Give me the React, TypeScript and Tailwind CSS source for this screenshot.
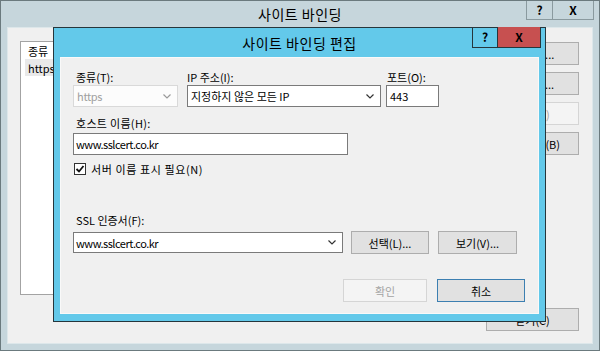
import React from "react";

function Chevron({ color = "#333" }: { color?: string }) {
  return (
    <svg width="8" height="5" viewBox="0 0 8 5" className="shrink-0">
      <path d="M0.5 0.5 L4 4 L7.5 0.5" fill="none" stroke={color} strokeWidth="1.2" />
    </svg>
  );
}

function Combo({ value, width, disabled }: { value: string; width: string; disabled?: boolean }) {
  return (
    <div
      className={`flex h-[22px] items-center justify-between pl-[3px] pr-[6px] ${width} ${
        disabled ? "border border-[#d9d9d9] bg-[#fcfcfc] text-[#a0a0a0]" : "border border-[#7a7a7a] bg-white text-black"
      }`}
    >
      <span className={disabled ? "tracking-[-0.3px]" : ""}>{value}</span>
      <Chevron color={disabled ? "#9a9a9a" : "#333"} />
    </div>
  );
}

function Btn({ label, width, variant = "normal" }: { label: string; width: string; variant?: "normal" | "default" | "disabled" }) {
  const look =
    variant === "disabled"
      ? "border-[#d5d5d5] bg-[#f4f4f4] text-[#a3a3a3]"
      : variant === "default"
        ? "border-[#3c7fb1] bg-[#e1e1e1] text-black"
        : "border-[#adadad] bg-[#e1e1e1] text-black";
  return <div className={`flex h-[23px] items-center justify-center border ${look} ${width}`}>{label}</div>;
}

export default function App() {
  return (
    <div className="relative h-[351px] w-[600px] overflow-hidden border border-[#6b7a7e] bg-[#c6d6dc] font-['Noto_Sans_CJK_KR','Liberation_Sans',sans-serif] text-[11px] leading-[16px] text-black">
      {/* 바깥 창 제목 */}
      <div className="relative flex h-[26px] items-center justify-center">
        <span className="text-[14px] tracking-[0.5px]">사이트 바인딩</span>
        <div className="absolute right-[5px] top-[-1px] flex">
          <div className="flex h-[20px] w-[27px] items-center justify-center border border-[#8a9a9f] text-[12px] font-bold">?</div>
          <div className="-ml-px flex h-[20px] w-[42px] items-center justify-center border border-[#8a9a9f] text-[12px] font-bold">X</div>
        </div>
      </div>

      {/* 바깥 창 본문 */}
      <div className="mx-[6px] flex h-[317px] border border-[#dde7ea] bg-[#f0f0f0]">
        <div className="ml-[12px] mt-[13px] h-[254px] w-[440px] border border-[#a3a3a3] bg-white">
          <div className="flex h-[17px] items-center pl-[7px]">종류</div>
          <div className="mx-[4px] flex h-[17px] items-center bg-[#e9e9e9] pl-[3px]">https</div>
        </div>
        <div className="ml-auto mr-[13px] mt-[14px] mb-[12px] flex w-[93px] flex-col">
          <div className="flex flex-col gap-[7px]">
            <Btn label="추가(A)..." width="w-[93px]" />
            <Btn label="편집(E)..." width="w-[93px]" />
            <Btn label="제거(R)" width="w-[93px]" variant="disabled" />
            <Btn label="찾아보기(B)" width="w-[93px]" />
          </div>
          <div className="mt-auto">
            <Btn label="닫기(C)" width="w-[93px]" />
          </div>
        </div>
      </div>

      {/* 사이트 바인딩 편집 대화 상자 */}
      <div className="absolute left-[52px] top-[26px] flex h-[295px] w-[493px] flex-col border border-[#26363c] bg-[#63c9ea] px-[6px] pb-[7px]">
        <div className="relative flex h-[29px] shrink-0 items-center justify-center">
          <span className="text-[14px] tracking-[0.5px]">사이트 바인딩 편집</span>
          <div className="absolute right-[-2px] top-[-1px] flex border border-t-0 border-[#26363c]">
            <div className="flex h-[20px] w-[25px] items-center justify-center border-r border-[#26363c] text-[12px] font-bold">?</div>
            <div className="flex h-[20px] w-[42px] items-center justify-center bg-[#c75050] text-[12px] font-bold">X</div>
          </div>
        </div>

        <div className="flex flex-1 flex-col border border-[#f9f9f9] bg-[#f0f0f0] pl-[12px] pr-[13px] pt-[11px]">
          {/* 종류 / IP 주소 / 포트 */}
          <div className="flex">
            <div className="flex w-[105px] flex-col">
              <span className="h-[16px] pl-[3px]">종류(T):</span>
              <Combo value="https" width="w-[105px]" disabled />
            </div>
            <div className="ml-[9px] flex w-[194px] flex-col">
              <span className="h-[16px]">IP 주소(I):</span>
              <Combo value="지정하지 않은 모든 IP" width="w-[194px]" />
            </div>
            <div className="ml-[5px] flex w-[53px] flex-col">
              <span className="h-[16px] pl-[1px]">포트(O):</span>
              <div className="flex h-[22px] items-center border border-[#7a7a7a] bg-white pl-[3px]">443</div>
            </div>
          </div>

          {/* 호스트 이름 */}
          <span className="mt-[8px] h-[16px] pl-[3px] tracking-[0.3px]">호스트 이름(H):</span>
          <div className="mt-[2px] flex h-[22px] w-[275px] items-center border border-[#7a7a7a] bg-white pl-[2px] tracking-[-0.5px]">
            www.sslcert.co.kr
          </div>

          {/* SNI */}
          <div className="mt-[7px] flex h-[13px] items-center gap-[5px] pl-[1px]">
            <div className="flex h-[12px] w-[12px] items-center justify-center border border-[#333] bg-white">
              <svg width="10" height="10" viewBox="0 0 10 10">
                <path d="M1.5 5 L4 7.5 L8.5 2" fill="none" stroke="#111" strokeWidth="1.8" />
              </svg>
            </div>
            <span className="tracking-[0.6px]">서버 이름 표시 필요(N)</span>
          </div>

          {/* SSL 인증서 */}
          <span className="mt-[37px] h-[16px] pl-[3px]">SSL 인증서(F):</span>
          <div className="mt-[3px] flex items-center">
            <div className="flex h-[21px] w-[270px] items-center justify-between border border-[#7a7a7a] bg-white pl-[2px] pr-[6px]">
              <span className="tracking-[-0.5px]">www.sslcert.co.kr</span>
              <Chevron />
            </div>
            <div className="ml-[8px]">
              <Btn label="선택(L)..." width="w-[78px]" />
            </div>
            <div className="ml-[9px]">
              <Btn label="보기(V)..." width="w-[79px]" />
            </div>
          </div>

          {/* 확인 / 취소 */}
          <div className="mt-[25px] flex justify-end gap-[10px]">
            <Btn label="확인" width="w-[84px]" variant="disabled" />
            <Btn label="취소" width="w-[88px]" variant="default" />
          </div>
        </div>
      </div>
    </div>
  );
}
